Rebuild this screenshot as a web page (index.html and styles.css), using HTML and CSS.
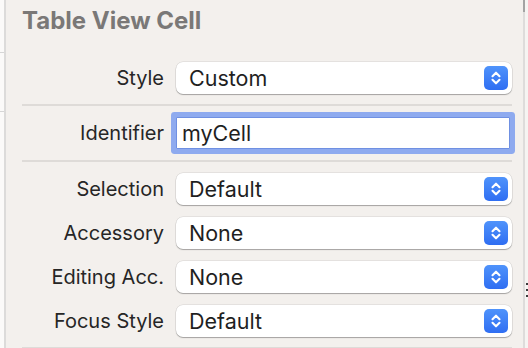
FILE: index.html
```html
<!DOCTYPE html>
<html>
  <head>
    <title>Table View Cell</title>
    <meta charset="utf-8">
    <link rel="stylesheet" href="styles.css">
  </head>
  <body>
    <div class="gutter">
      <div class="gutter-line first"></div>
      <div class="gutter-line second"></div>
    </div>

    <div class="inspector">
      <h1 class="title">Table View Cell</h1>

      <div class="row">
        <label class="label">Style</label>
        <div class="popup">
          <span class="value">Custom</span>
          <span class="stepper"><svg viewBox="0 0 24 24" width="24" height="24"><path d="M8.5 10.2 L12 6.7 L15.5 10.2 M8.5 13.8 L12 17.3 L15.5 13.8" fill="none" stroke="#fff" stroke-width="2.1" stroke-linecap="round" stroke-linejoin="round"/></svg></span>
        </div>
      </div>

      <div class="sep"></div>

      <div class="row first-after-sep">
        <label class="label">Identifier</label>
        <div class="field"><span class="value">myCell</span></div>
      </div>

      <div class="sep sep-low"></div>

      <div class="row first-after-sep">
        <label class="label">Selection</label>
        <div class="popup">
          <span class="value">Default</span>
          <span class="stepper"><svg viewBox="0 0 24 24" width="24" height="24"><path d="M8.5 10.2 L12 6.7 L15.5 10.2 M8.5 13.8 L12 17.3 L15.5 13.8" fill="none" stroke="#fff" stroke-width="2.1" stroke-linecap="round" stroke-linejoin="round"/></svg></span>
        </div>
      </div>

      <div class="row">
        <label class="label">Accessory</label>
        <div class="popup">
          <span class="value">None</span>
          <span class="stepper"><svg viewBox="0 0 24 24" width="24" height="24"><path d="M8.5 10.2 L12 6.7 L15.5 10.2 M8.5 13.8 L12 17.3 L15.5 13.8" fill="none" stroke="#fff" stroke-width="2.1" stroke-linecap="round" stroke-linejoin="round"/></svg></span>
        </div>
      </div>

      <div class="row">
        <label class="label">Editing Acc.</label>
        <div class="popup">
          <span class="value">None</span>
          <span class="stepper"><svg viewBox="0 0 24 24" width="24" height="24"><path d="M8.5 10.2 L12 6.7 L15.5 10.2 M8.5 13.8 L12 17.3 L15.5 13.8" fill="none" stroke="#fff" stroke-width="2.1" stroke-linecap="round" stroke-linejoin="round"/></svg></span>
        </div>
      </div>

      <div class="row">
        <label class="label">Focus Style</label>
        <div class="popup">
          <span class="value">Default</span>
          <span class="stepper"><svg viewBox="0 0 24 24" width="24" height="24"><path d="M8.5 10.2 L12 6.7 L15.5 10.2 M8.5 13.8 L12 17.3 L15.5 13.8" fill="none" stroke="#fff" stroke-width="2.1" stroke-linecap="round" stroke-linejoin="round"/></svg></span>
        </div>
      </div>

      <div class="sep sep-bottom"></div>
    </div>

    <div class="edge">
      <div class="edge-mark"></div>
      <div class="edge-glyph"></div>
    </div>
  </body>
</html>
```

FILE: styles.css
```css
body{
  margin: 0;
  height: 348px;
  overflow: hidden;
  display: flex;
  background-color: #f3f0ed;
  font-family: Inter, "Liberation Sans", sans-serif;
  color: #262626;
}
.gutter{
  flex: 0 0 4px;
  background-color: #fbfaf9;
  border-right: 2px solid #dcdbda;
}
.gutter-line{
  height: 1px;
  background-color: #d6d6d6;
}
.gutter-line.first{
  margin-top: 52px;
}
.gutter-line.second{
  margin-top: 58px;
}
.inspector{
  flex: 0 0 517px;
}
.title{
  margin: 0;
  padding: 6px 0 0 16px;
  height: 54px;
  box-sizing: border-box;
  font-size: 24px;
  line-height: 30px;
  font-weight: 700;
  color: #7a7877;
}
.row{
  display: grid;
  grid-template-columns: 142px 336px;
  column-gap: 12px;
  align-items: center;
  padding-left: 16px;
  margin-top: 12px;
  height: 32px;
}
.title + .row{
  margin-top: 8px;
}
.row.first-after-sep{
  margin-top: 11px;
}
.label{
  text-align: right;
  font-size: 20px;
  white-space: nowrap;
}
.popup{
  display: flex;
  align-items: center;
  justify-content: space-between;
  height: 32px;
  padding: 0 4px 0 13px;
  box-sizing: border-box;
  background-color: #fff;
  border-radius: 7px;
  box-shadow: 0 1px 1px rgba(0, 0, 0, 0.28), 0 0 0 0.5px rgba(0, 0, 0, 0.12);
}
.value{
  font-size: 21.5px;
  color: #1f1f1f;
}
.stepper{
  display: flex;
  width: 24px;
  height: 24px;
  border-radius: 5px;
  background: linear-gradient(#4f93fb, #2f6ef2);
}
.field{
  display: flex;
  align-items: center;
  width: 334px;
  height: 32px;
  padding-left: 5px;
  box-sizing: border-box;
  background-color: #fff;
  border: 1px solid #6f90e2;
  border-radius: 1px;
  box-shadow: 0 0 0 5px #8eaaef;
}
.sep{
  height: 2px;
  margin: 10px 0 0 16px;
  width: 490px;
  background-color: #dedbd8;
}
.sep-low{
  margin-top: 11px;
}
.sep-bottom{
  height: 4px;
}
.edge{
  flex: 1;
  background-color: #f6f4f2;
  border-left: 2px solid #dedcdb;
}
.edge-mark{
  height: 12px;
  margin-left: -2px;
  width: 2px;
  background-color: #a3a3a3;
}
.edge-glyph{
  width: 2px;
  height: 16px;
  margin: 271px 0 0 1px;
  background: repeating-linear-gradient(#3a3a3a 0 2px, transparent 2px 6px);
}
```
